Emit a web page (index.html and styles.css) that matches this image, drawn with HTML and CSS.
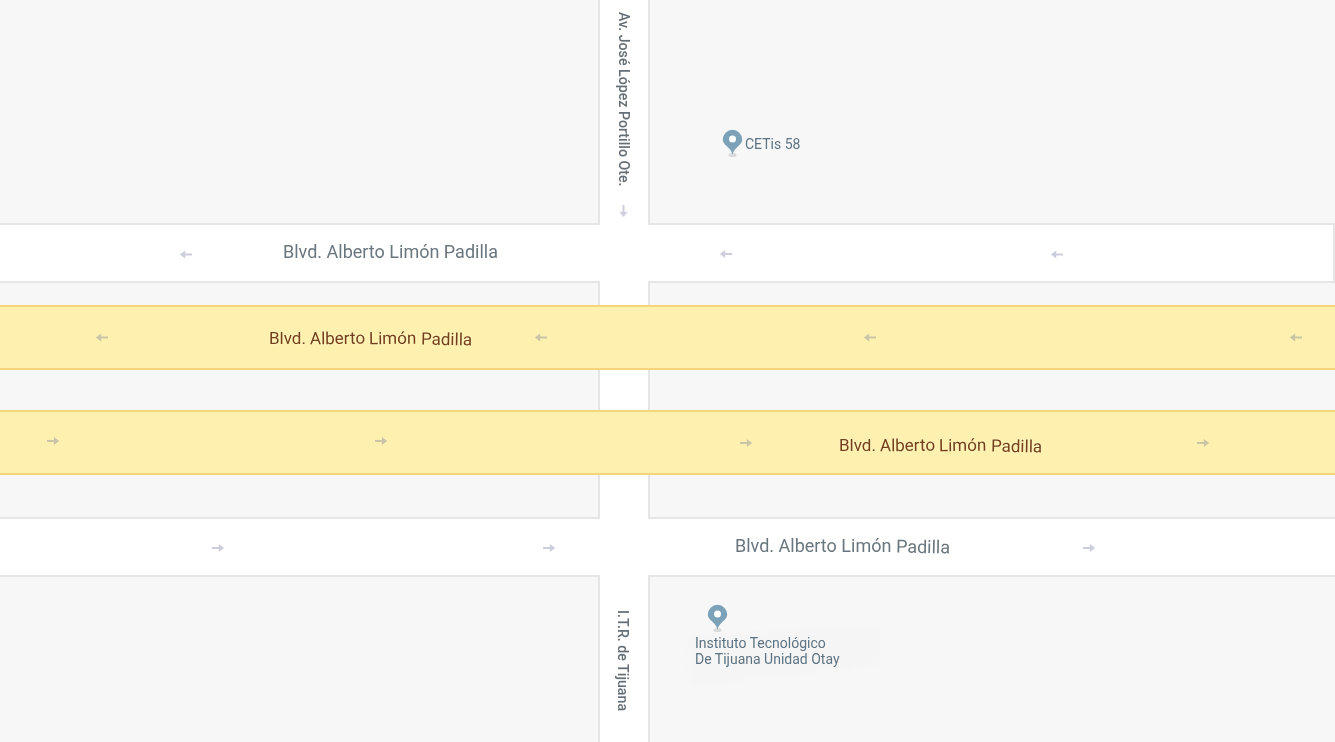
FILE: index.html
```html
<!DOCTYPE html>
<html lang="es">
<head>
<meta charset="utf-8">
<title>Mapa</title>
<link rel="stylesheet" href="styles.css">
</head>
<body>
<main class="map">
<svg class="roads" width="1335" height="742" viewBox="0 0 1335 742" aria-hidden="true">
  <defs>
    <path id="arrow" d="M-6 -1H.8V-4L6.200 0 .8 4V1H-6Z"/>
    <path id="pin" d="M0 24.500C-1 20.500-3.500 18-6.400 15.500-8.700 13.500-9.700 11.500-9.700 9.500A9.700 9.700 0 0 1 9.700 9.500C9.700 11.500 8.700 13.500 6.400 15.500 3.500 18 1 20.500 0 24.500Z"/>
  </defs>
  <path class="halo" d="M688 640C690 632 720 634 760 632C800 630 860 624 880 630L880 664C840 670 780 676 760 678C730 682 700 686 690 682Z"/>
  <path class="casing" d="M-4 223H598V-4H650V223H1335V283H650V517H1340V577H650V746H598V577H-4V517H598V283H-4Z"/>
  <path class="road" d="M-4 225H600V-4H648V225H1333V281H648V519H1340V575H648V746H600V575H-4V519H600V281H-4Z"/>
  <rect class="hwy" x="-4" y="306" width="1343" height="63"/>
  <rect class="hwy" x="-4" y="411" width="1343" height="63"/>
  <g class="arrows">
    <use href="#arrow" transform="translate(186 254.500) rotate(180)"/>
    <use href="#arrow" transform="translate(726 254) rotate(180)"/>
    <use href="#arrow" transform="translate(1057 254.500) rotate(180)"/>
    <use href="#arrow" transform="translate(218 548)"/>
    <use href="#arrow" transform="translate(549 548)"/>
    <use href="#arrow" transform="translate(1089 548)"/>
    <use href="#arrow" transform="translate(623.500 211) rotate(90)"/>
  </g>
  <g class="arrows-hwy">
    <use href="#arrow" transform="translate(102 337.500) rotate(180)"/>
    <use href="#arrow" transform="translate(541 337.500) rotate(180)"/>
    <use href="#arrow" transform="translate(870 337.500) rotate(180)"/>
    <use href="#arrow" transform="translate(1296 337.500) rotate(180)"/>
    <use href="#arrow" transform="translate(53 441)"/>
    <use href="#arrow" transform="translate(381 441)"/>
    <use href="#arrow" transform="translate(746 443)"/>
    <use href="#arrow" transform="translate(1203 443)"/>
  </g>
  <g class="pins">
    <ellipse class="pin-shadow" cx="732.500" cy="155" rx="4" ry="2"/>
    <use href="#pin" transform="translate(732.500 130)"/>
    <circle class="pin-dot" cx="732.500" cy="139" r="3.500"/>
    <ellipse class="pin-shadow" cx="717.500" cy="630" rx="4" ry="2"/>
    <use href="#pin" transform="translate(717.500 605)"/>
    <circle class="pin-dot" cx="717.500" cy="614" r="3.500"/>
  </g>
</svg>

<div class="label street street-a"><span>Blvd.</span> <span>Alberto</span> <span>Limón</span> <span>Padilla</span></div>
<div class="label highway highway-a"><span>Blvd.</span> <span class="tilt-up">Alberto</span> <span class="tilt-up">Limón</span> <span class="tilt-down">Padilla</span></div>
<div class="label highway highway-b"><span>Blvd.</span> <span class="tilt-up">Alberto</span> <span class="tilt-up">Limón</span> <span class="tilt-down">Padilla</span></div>
<div class="label street street-b"><span>Blvd.</span> <span>Alberto</span> <span>Limón</span> <span class="tilt-down">Padilla</span></div>
<div class="label vertical vertical-a">Av. José López Portillo Ote.</div>
<div class="label vertical vertical-b">I.T.R. de Tijuana</div>
<div class="label poi poi-a">CETis 58</div>
<div class="label poi poi-b">Instituto Tecnológico<br>De Tijuana Unidad Otay</div>
</main>
</body>
</html>
```
FILE: styles.css
```css
html, body {
  margin: 0;
  padding: 0;
  height: 100%;
  overflow: hidden;
  background: #f7f7f7;
}
.map {
  position: relative;
  width: 1335px;
  height: 742px;
  overflow: hidden;
  background: #f7f7f7;
  font-family: Roboto, "Liberation Sans", sans-serif;
}
.roads { position: absolute; inset: 0; display: block; }
.halo { fill: #f5f5f5; filter: blur(1px); }
.casing { fill: #e6e6e6; }
.road { fill: #fff; }
.hwy { fill: #fef1af; stroke: #f5d57a; stroke-width: 2; }
.arrows { fill: #cdcedd; filter: blur(.5px); }
.arrows-hwy { fill: #c9c5a6; filter: blur(.5px); }
.pins use { fill: #7ba2b8; }
.pin-dot { fill: #fff; }
.pin-shadow { fill: #d9dadb; filter: blur(.6px); }
.label { position: absolute; white-space: nowrap; filter: blur(.3px); }
.label span { display: inline-block; }
.tilt-up { transform: rotate(-.6deg); }
.tilt-down { transform: translateY(1px) rotate(1deg); }
.street { font-size: 18px; line-height: 20px; color: #6a767e; }
.street-a { left: 283px; top: 242px; }
.street-b { left: 735px; top: 536px; }
.highway {
  font-size: 17px;
  line-height: 20px;
  color: #74401a;
  text-shadow: 0 0 2px #fff8d8;
}
.highway-a { left: 269px; top: 328px; }
.highway-b { left: 839px; top: 435px; }
.vertical {
  font-size: 14.200px;
  line-height: 16px;
  font-weight: 500;
  color: #656e75;
  transform-origin: 0 0;
  transform: rotate(90deg);
}
.vertical-a { left: 632px; top: 12px; }
.vertical-b { left: 631px; top: 610px; }
.poi { font-size: 14px; line-height: 16px; color: #5d7382; }
.poi-a { left: 745px; top: 136px; }
.poi-b { left: 695px; top: 635px; }
```
